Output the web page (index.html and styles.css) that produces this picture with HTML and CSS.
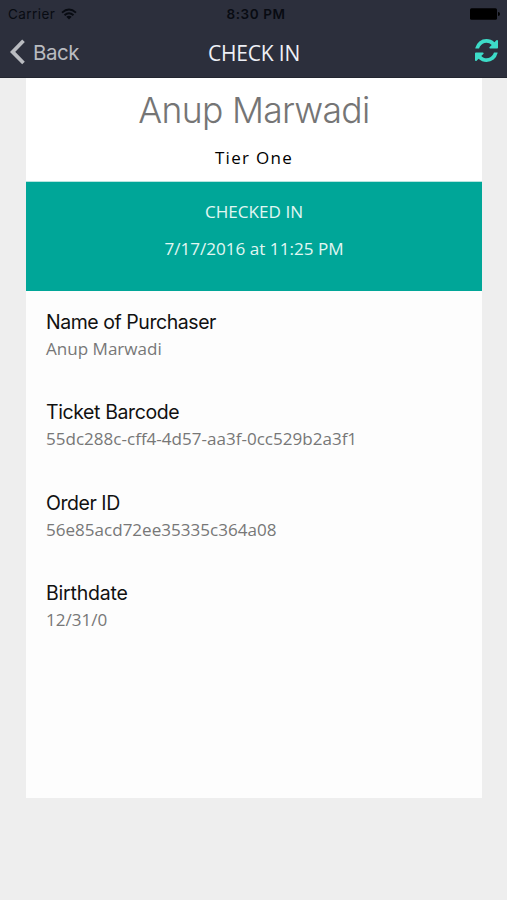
FILE: index.html
```html
<!DOCTYPE html>
<html lang="en">
<head>
<meta charset="utf-8">
<title>Check In</title>
<link rel="stylesheet" href="styles.css">
</head>
<body>
<header class="header">
  <div class="status">
    <div class="status-left"><span class="carrier">Carrier</span>
      <svg class="wifi" viewBox="0 0 16 12" width="16" height="12"><g fill="none" stroke="#080b12" stroke-width="1.9"><path d="M1 4.6Q8-1.6 15 4.6"/><path d="M3.5 7.3Q8 3.3 12.500 7.300"/></g><path d="M5.300 8.800Q8 6.600 10.700 8.800L8 11.500Z" fill="#080b12"/></svg>
    </div>
    <span class="time">8:30 PM</span>
    <svg class="battery" viewBox="0 0 30 12" width="30" height="12"><rect x="0" y="0.300" width="27" height="11.400" rx="1.500"/><path d="M28 4q2 0 2 2t-2 2z"/></svg>
  </div>
  <nav class="nav">
    <a class="back"><svg viewBox="0 0 16 26" width="16" height="26"><path d="M13.500 1.800 2.600 12.900 13.500 24" fill="none" stroke="#b9bbc0" stroke-width="3.700"/></svg><span class="back-text">Back</span></a>
    <h1 class="title">CHECK IN</h1>
    <svg class="refresh" viewBox="0 0 1536 1536" width="23" height="23"><path fill="#3ddcc8" d="M1511 928q0 5-1 7-64 268-268 434.500T764 1536q-146 0-282.500-55T238 1324l-129 129q-19 19-45 19t-45-19-19-45V960q0-26 19-45t45-19h448q26 0 45 19t19 45-19 45l-137 137q71 66 161 102t187 36q134 0 250-65t186-179q11-17 53-117 8-23 30-23h192q13 0 22.500 9.500t9.500 22.500zM1536 128v448q0 26-19 45t-45 19h-448q-26 0-45-19t-19-45 19-45l138-138Q969 256 768 256q-134 0-250 65T332 500q-11 17-53 117-8 23-30 23H50q-13 0-22.500-9.500T18 608v-7q65-268 270-434.500T768 0q146 0 284 55.500T1297 212l130-129q19-19 45-19t45 19 19 45z"/></svg>
  </nav>
</header>
<main class="card">
  <section class="person">
    <h2 class="name">Anup Marwadi</h2>
    <p class="tier">Tier One</p>
  </section>
  <section class="checked">
    <p class="state">CHECKED IN</p>
    <p class="when">7/17/2016 at 11:25 PM</p>
  </section>
  <dl class="details">
    <div class="field"><dt class="label purchaser">Name of Purchaser</dt><dd class="value v-name">Anup Marwadi</dd></div>
    <div class="field"><dt class="label barcode">Ticket Barcode</dt><dd class="value v-code">55dc288c-cff4-4d57-aa3f-0cc529b2a3f1</dd></div>
    <div class="field"><dt class="label order">Order ID</dt><dd class="value v-order">56e85acd72ee35335c364a08</dd></div>
    <div class="field"><dt class="label birth">Birthdate</dt><dd class="value v-date">12/31/0</dd></div>
  </dl>
</main>
</body>
</html>
```
FILE: styles.css
```css
* { box-sizing: border-box; }
body { margin: 0; height: 900px; background: #eeeeee; font-family: "Open Sans", sans-serif; }
h1, h2, p, dl, dd { margin: 0; font-weight: 400; }
svg { display: block; }
.header { height: 78px; background: #2c2f3c; border-bottom: 1px solid #232630; }
.status { height: 27px; display: grid; grid-template-columns: 1fr auto 1fr; align-items: center; padding: 0 7px 0 8px; color: #080b12; font: 13.5px/27px Inter, sans-serif; }
.status-left { display: flex; align-items: center; gap: 6px; }
.carrier { padding-top: 1px; letter-spacing: 0.45px; }
.time { padding-top: 1px; font-weight: 600; letter-spacing: 0.6px; margin-left: 4px; }
.wifi { margin-top: -1px; }
.battery { justify-self: end; fill: #000; }
.nav { height: 50px; display: grid; grid-template-columns: 1fr auto 1fr; align-items: center; padding: 0 9px 0 10px; }
.back { display: flex; align-items: center; gap: 7px; color: #b9bbc0; font: 20.5px/26px Inter, sans-serif; letter-spacing: -0.5px; }
.back-text { padding-top: 1px; }
.title { color: #eef0f6; font-size: 21px; line-height: 28px; letter-spacing: -0.2px; padding-top: 1px; }
.refresh { justify-self: end; margin-top: -4px; }
.card { width: 456px; height: 720px; margin-left: 26px; background: #fdfdfd; }
.person { height: 104px; padding-top: 11px; text-align: center; background: #fff; border-bottom: 1px solid #b6e4df; }
.name { color: #757575; font: 360 35.5px/44px Inter, sans-serif; letter-spacing: -0.7px; }
.tier { margin-top: 13px; color: #000; font-size: 17px; font-weight: 500; line-height: 24px; letter-spacing: 1.3px; }
.checked { height: 109px; padding-top: 18px; background: #00a698; color: #e2f7f3; text-align: center; font-size: 17.1px; line-height: 24px; }
.when { margin-top: 13px; }
.details { padding: 18px 20px 0; }
.field { height: 90.4px; }
.label { color: #111; font: 19.5px/26px Inter, sans-serif; letter-spacing: -0.45px; }
.barcode { letter-spacing: -0.4px; }
.birth { letter-spacing: -0.2px; }
.value { padding-top: 1px; color: #777; font-size: 17.06px; line-height: 26px; }
```
